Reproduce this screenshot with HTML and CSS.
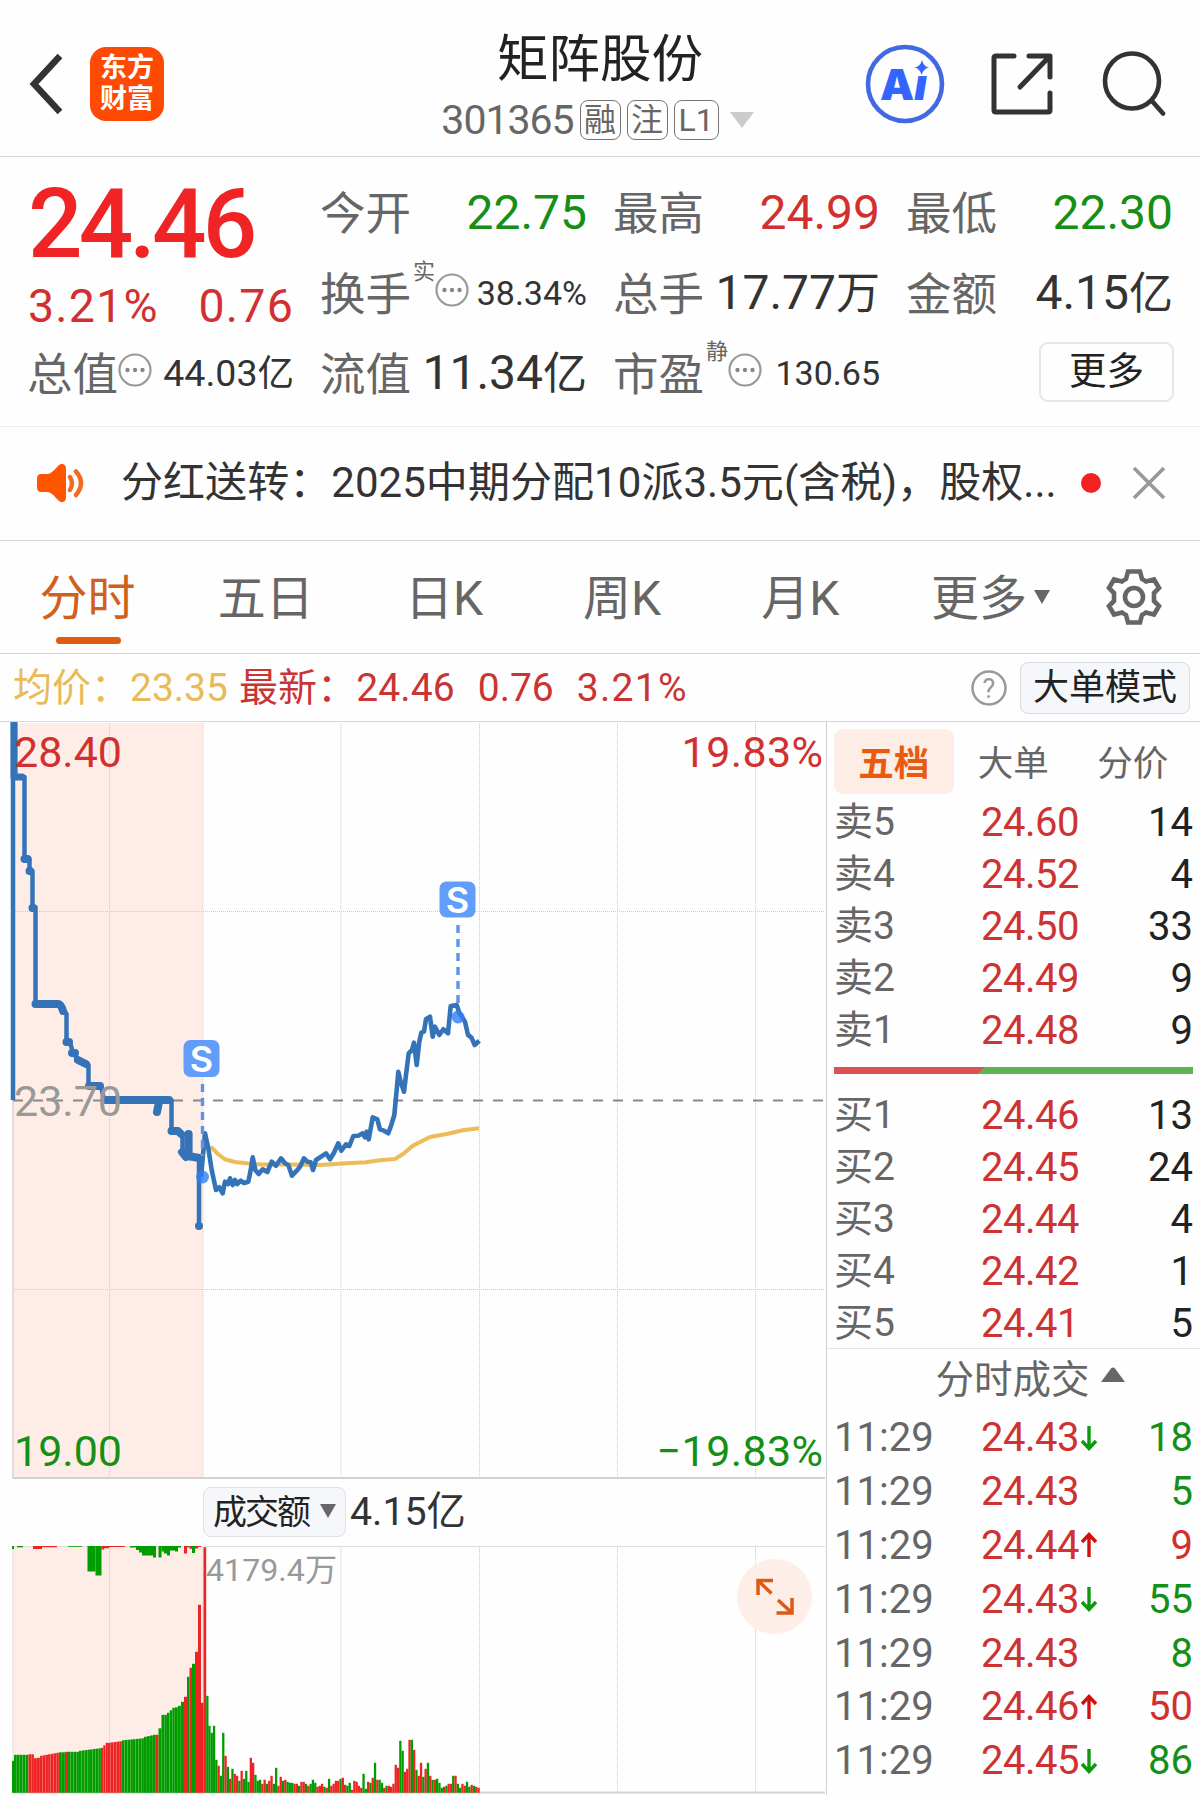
FILE: index.html
```html
<!DOCTYPE html>
<html lang="zh-CN">
<head>
    <meta charset="UTF-8">
    <meta name="viewport" content="width=device-width, initial-scale=1.0">
    <title>矩阵股份 301365</title>
    <link rel="stylesheet" href="styles.css">
</head>
<body>

<header class="header">
    <div class="header-left">
        <svg class="back" width="38" height="62" viewBox="0 0 38 62"><path d="M33 3 L7 31 L33 59" fill="none" stroke="#333" stroke-width="6.500"/></svg>
        <div class="logo"><span>东方</span><span>财富</span></div>
    </div>
    <div class="header-title">
        <h1>矩阵股份</h1>
        <div class="code-row">
            <span class="code">301365</span>
            <span class="badge">融</span>
            <span class="badge">注</span>
            <span class="badge badge-wide">L1</span>
            <svg class="code-arrow" width="24" height="16" viewBox="0 0 24 16"><path d="M0 0H24L12 16Z" fill="#ccc"/></svg>
        </div>
    </div>
    <div class="header-right">
        <svg width="80" height="80" viewBox="0 0 80 80">
            <circle cx="40" cy="40" r="37" fill="none" stroke="#4169e1" stroke-width="4.6"/>
            <text class="ai-text" x="15" y="56">A<tspan class="ai-i">ı</tspan></text>
            <path d="M57 16 Q58.500 22.500 64 23.500 Q58.500 24.500 56.500 31 Q55 24.500 49.500 23.500 Q55.500 22.500 57 16Z" fill="#3366ff"/>
        </svg>
        <svg width="64" height="64" viewBox="0 0 64 64" fill="none" stroke="#333" stroke-width="5" stroke-linecap="round" stroke-linejoin="round">
            <path d="M24 4H6Q4 4 4 6V58Q4 60 6 60H58Q60 60 60 58V41"/>
            <path d="M39 4H60V25M59 5L30 35"/>
        </svg>
        <svg width="64" height="66" viewBox="0 0 64 66" fill="none" stroke="#333" stroke-width="4.600" stroke-linecap="round">
            <ellipse cx="30" cy="30" rx="27" ry="27.500"/>
            <path d="M50 50L61 62.500"/>
        </svg>
    </div>
</header>

<section class="quote">
    <div class="price-cell">
        <div class="price">24.46</div>
        <div class="change"><span>3.21%</span><span>0.76</span></div>
    </div>
    <div class="cell"><span class="name">今开</span><span class="value down">22.75</span></div>
    <div class="cell"><span class="name">最高</span><span class="value up">24.99</span></div>
    <div class="cell"><span class="name">最低</span><span class="value down">22.30</span></div>
    <div class="cell"><span class="name">换手</span><span class="mark">实</span>
        <svg class="dots" width="34" height="34"><use href="#dots"/></svg>
        <span class="value small">38.34%</span></div>
    <div class="cell"><span class="name">总手</span><span class="value">17.77<i>万</i></span></div>
    <div class="cell"><span class="name">金额</span><span class="value">4.15<i>亿</i></span></div>
    <div class="cell"><span class="name">总值</span>
        <svg class="dots" width="34" height="34"><use href="#dots"/></svg>
        <span class="value medium">44.03<i>亿</i></span></div>
    <div class="cell"><span class="name">流值</span><span class="value">11.34<i>亿</i></span></div>
    <div class="cell"><span class="name">市盈</span><span class="mark">静</span>
        <svg class="dots" width="34" height="34"><use href="#dots"/></svg>
        <span class="value small">130.65</span></div>
    <div class="cell"><button class="btn-more">更多</button></div>
</section>

<section class="notice">
    <svg class="speaker" width="50" height="42" viewBox="0 0 50 42">
        <path d="M5 12H12Q16 11 21 5Q25 1 27 2Q30 3 30 7V35Q30 39 27 40Q25 41 21 37Q16 31 12 30H5Q1 30 1 25V17Q1 12 5 12Z" fill="#ff5500"/>
        <path d="M34 15Q38 21 34 28M40 9.500Q50 21 40 33" fill="none" stroke="#f26a25" stroke-width="4.500" stroke-linecap="round"/>
    </svg>
    <span class="notice-text">分红送转：2025中期分配10派3.5元(含税)，股权...</span>
    <span class="notice-dot"></span>
    <svg width="34" height="34" viewBox="0 0 34 34"><path d="M2 2L32 32M32 2L2 32" stroke="#999" stroke-width="3.600"/></svg>
</section>

<nav class="tabs">
    <div class="tab active">分时</div>
    <div class="tab">五日</div>
    <div class="tab">日K</div>
    <div class="tab">周K</div>
    <div class="tab">月K</div>
    <div class="tab">更多<svg class="tab-arrow" width="16" height="14" viewBox="0 0 16 14"><path d="M0 0H16L8 14Z" fill="#666"/></svg></div>
    <svg class="gear" width="60" height="68" viewBox="-30 -34 60 68" fill="none" stroke="#666" stroke-width="4.600">
        <path d="M-6 -25.500H6L8 -18Q10 -17 12 -15.500L20 -17.500L25 -9L20 -4V4L25 9L20 17.500L12 15.500Q10 17 8 18L6 25.500H-6L-8 18Q-10 17 -12 15.500L-20 17.500L-25 9L-20 4V-4L-25 -9L-20 -17.500L-12 -15.500Q-10 -17 -8 -18Z"/>
        <circle r="9"/>
    </svg>
</nav>

<div class="info">
    <span class="avg">均价：23.35</span>
    <span class="last">最新：24.46</span>
    <span class="last-num">0.76</span>
    <span class="last-num percent">3.21%</span>
    <svg class="help" width="38" height="38" viewBox="0 0 38 38">
        <circle cx="19" cy="19" r="16.500" fill="none" stroke="#999" stroke-width="2.500"/>
        <text x="19" y="28.500">?</text>
    </svg>
    <button class="btn-mode">大单模式</button>
</div>

<main class="main">
    <div class="charts">
        <svg class="price-chart" width="826" height="757" viewBox="0 722 826 757">
            <rect x="13" y="723" width="190" height="755" fill="#fdede6"/>
            <g class="grid">
                <path d="M109.500 723V1478M203 723V1478M341 723V1478M479.500 723V1478M617.500 723V1478M755.500 723V1478"/>
                <path d="M13 911.500H825M13 1289.500H825"/>
            </g>
            <path d="M13 1100V1478" stroke="#ddd" stroke-width="2"/>
            <path d="M13 1478H825" stroke="#d2d2d2" stroke-width="2"/>
            <path d="M13 1100.500H825" stroke="#888" stroke-width="2" stroke-dasharray="10 10"/>

            <polyline class="avg-line" points="210.600,1146.600 218,1154 225,1159.300 235,1162 246.600,1163.300 260,1164.600 290,1164.600 320,1165 343,1163.600 366,1162.300 380,1160.300 395,1159 403,1154 413,1145.600 430,1137 446.600,1134 463,1130.300 479,1128.300"/>

            <!-- call auction -->
            <g class="auction">
                <path d="M13 723V1100M15 723V777H24.500V859H29.500V871H32.500V907H35.500V1004H60L66.500 1014V1042H70L73 1053L78 1060L88.500 1065V1086H101L104 1100H171.500V1131H179L182.500 1135V1153H190V1133H188V1158H199V1226"/>
                <path class="thick" d="M24.500 859H27.500M29.500 871H30M32.500 908H33M35.500 1004H58Q61 1004 63 1011M66.500 1042H69M72 1053H75M78 1060L86 1064M89 1086H100M106 1100H169M159 1102L157 1112M171.500 1131H178L181 1134M182 1152L186 1157M188.500 1134V1156L199 1158M199 1226V1226.100"/>
                <path class="thick first" d="M14 720V777H22"/>
            </g>

            <polyline class="price-line" id="priceLine"/>

            <path class="trade-dash" d="M202.500 1084V1156M458 925V1008"/>
            <circle class="trade-dot" cx="202.500" cy="1177" r="6.500"/>
            <circle class="trade-dot" cx="458" cy="1017" r="6.500"/>
            <rect class="trade-box" x="183.500" y="1040" width="36" height="37" rx="7"/>
            <text class="trade-text" x="201.500" y="1071.500">S</text>
            <rect class="trade-box" x="439.500" y="881.500" width="36" height="36" rx="7"/>
            <text class="trade-text" x="457.500" y="913">S</text>

            <text class="axis red" x="14" y="767">28.40</text>
            <text class="axis gray" x="14" y="1116">23.70</text>
            <text class="axis green" x="14" y="1466">19.00</text>
            <text class="axis red end" x="823.500" y="767">19.83%</text>
            <text class="axis green end" x="823.500" y="1466">−19.83%</text>
        </svg>

        <div class="volume-head">
            <div class="select">成交额<svg width="16" height="14" viewBox="0 0 16 14"><path d="M0 0H16L8 14Z" fill="#666"/></svg></div>
            <span class="turnover">4.15亿</span>
        </div>

        <svg class="volume-chart" width="826" height="249" viewBox="0 1546 826 249">
            <rect x="13" y="1547" width="190" height="245" fill="#fdede6"/>
            <g class="grid">
                <path d="M109.500 1547V1792M203 1547V1792M341 1547V1792M479.500 1547V1792M617.500 1547V1792M755.500 1547V1792"/>
            </g>
            <path d="M13 1546.500H825M13 1547V1792" stroke="#ddd"/>
            <path d="M13 1792.500H825" stroke="#d2d2d2" stroke-width="2"/>
            <g id="bars"></g>
            <text class="max-volume" x="206" y="1581">4179.4万</text>
            <circle cx="774.500" cy="1596.500" r="37.500" fill="#fdede5" fill-opacity=".9"/>
            <path d="M773 1580.500H758V1595M758.500 1581L771.500 1593.500M776.500 1613H792V1598M791.500 1612.500L778 1600" fill="none" stroke="#d95b16" stroke-width="3.500"/>
        </svg>
    </div>

    <aside class="side">
        <div class="side-tabs">
            <div class="side-tab active">五档</div>
            <div class="side-tab">大单</div>
            <div class="side-tab">分价</div>
        </div>
        <div class="row"><span>卖5</span><b>24.60</b><em>14</em></div>
        <div class="row"><span>卖4</span><b>24.52</b><em>4</em></div>
        <div class="row"><span>卖3</span><b>24.50</b><em>33</em></div>
        <div class="row"><span>卖2</span><b>24.49</b><em>9</em></div>
        <div class="row"><span>卖1</span><b>24.48</b><em>9</em></div>
        <div class="ratio"></div>
        <div class="row"><span>买1</span><b>24.46</b><em>13</em></div>
        <div class="row"><span>买2</span><b>24.45</b><em>24</em></div>
        <div class="row"><span>买3</span><b>24.44</b><em>4</em></div>
        <div class="row"><span>买4</span><b>24.42</b><em>1</em></div>
        <div class="row"><span>买5</span><b>24.41</b><em>5</em></div>
        <div class="deals-title">分时成交<svg width="24" height="15" viewBox="0 0 24 15"><path d="M0 15L10 1.500Q12 -.5 14 1.500L24 15Z" fill="#666"/></svg></div>
        <div class="row deal"><span>11:29</span><b>24.43<svg class="arrow" width="18" height="26"><use href="#down"/></svg></b><em class="down">18</em></div>
        <div class="row deal"><span>11:29</span><b>24.43</b><em class="down">5</em></div>
        <div class="row deal"><span>11:29</span><b>24.44<svg class="arrow" width="18" height="26"><use href="#up"/></svg></b><em class="up">9</em></div>
        <div class="row deal"><span>11:29</span><b>24.43<svg class="arrow" width="18" height="26"><use href="#down"/></svg></b><em class="down">55</em></div>
        <div class="row deal"><span>11:29</span><b>24.43</b><em class="down">8</em></div>
        <div class="row deal"><span>11:29</span><b>24.46<svg class="arrow" width="18" height="26"><use href="#up"/></svg></b><em class="up">50</em></div>
        <div class="row deal"><span>11:29</span><b>24.45<svg class="arrow" width="18" height="26"><use href="#down"/></svg></b><em class="down">86</em></div>
    </aside>
</main>

<svg class="symbols" width="0" height="0">
    <symbol id="dots" viewBox="0 0 34 34">
        <circle cx="17" cy="17" r="15.500" fill="none" stroke="#999" stroke-width="2.200"/>
        <circle cx="9.500" cy="17" r="2.200" fill="#888"/><circle cx="17" cy="17" r="2.200" fill="#888"/><circle cx="24.500" cy="17" r="2.200" fill="#888"/>
    </symbol>
    <symbol id="down" viewBox="0 0 18 26">
        <path d="M9 1V23M2 16L9 23.500L16 16" fill="none" stroke="#0c9a0c" stroke-width="3.400"/>
    </symbol>
    <symbol id="up" viewBox="0 0 18 26">
        <path d="M9 25V3M2 10L9 2.500L16 10" fill="none" stroke="#d01010" stroke-width="3.400"/>
    </symbol>
</svg>

<script>
    // minute prices, x / y pairs in thirds of a pixel from (180, 1000)
    const prices = [63,530, 75,400, 85,445, 95,510, 108,570, 118,562, 128,580, 135,545, 145,552, 150,535, 158,555, 165,540, 172,552,
        182,542, 192,549, 205,545, 212,510, 218,472, 226,510, 236,522, 248,508, 262,516, 275,485, 288,497, 303,475, 315,490,
        325,495, 336,527, 350,512, 360,500, 372,475, 382,485, 392,487, 399,510, 408,480, 420,472, 438,460, 450,478, 462,458,
        475,430, 484,452, 498,433, 508,438, 520,408, 535,407, 548,400, 555,412, 560,395, 566,418, 578,352, 592,358, 600,388,
        612,392, 625,400, 634,375, 643,345, 650,270, 655,215, 662,245, 672,275, 678,225, 686,160, 696,150, 702,128, 710,195,
        718,125, 724,98, 732,95, 738,58, 750,50, 758,110, 765,80, 778,105, 790,88, 804,100, 812,18, 830,15, 838,38, 855,65,
        864,105, 874,112, 884,135, 898,122];
    const points = [];
    for (let i = 0; i < prices.length; i += 2) {
        points.push((180 + prices[i] / 3).toFixed(1) + ',' + (1000 + prices[i + 1] / 3).toFixed(1));
    }
    document.getElementById('priceLine').setAttribute('points', points.join(' '));

    const bars = document.getElementById('bars');
    const GREEN = '#009c00';
    const RED = '#ee2424';

    function addBar(x, y, width, height, color) {
        const rect = document.createElementNS('http://www.w3.org/2000/svg', 'rect');
        rect.setAttribute('x', x.toFixed(1));
        rect.setAttribute('y', y.toFixed(1));
        rect.setAttribute('width', width);
        rect.setAttribute('height', height.toFixed(1));
        rect.setAttribute('fill', color);
        bars.appendChild(rect);
    }

    // call auction: [from x, to x, start height, end height, color]
    const auction = [
        [12, 14, 32, 32, 'g'], [14, 28.5, 38, 38, 'g'], [28.5, 34, 38.5, 38.5, 'r'], [34, 40, 34.5, 35, 'r'], [40, 59, 37, 40, 'r'],
        [59, 65, 40.5, 40.5, 'g'], [65, 68, 41, 41, 'r'], [68, 79, 41, 41, 'g'], [79, 101, 42, 44.5, 'g'], [101, 108, 45, 50, 'r'],
        [108, 122, 50, 51.5, 'r'], [122, 144, 52.5, 54.5, 'g'], [144, 156, 56, 58, 'g'], [156, 158.5, 58, 58, 'r'],
        [158.5, 161.5, 64.5, 64.5, 'g'], [161.5, 167, 78, 78, 'g'], [167, 175, 80, 85, 'g'], [175, 181, 85.5, 87, 'g'],
        [181, 184, 91, 91, 'g'], [184, 187, 96, 96, 'r'], [187, 189.5, 116, 116, 'g'], [189.5, 192, 125, 125, 'r'],
        [192, 195, 129, 129, 'g'], [195, 198, 141, 141, 'r'], [198, 201, 188, 188, 'r'], [201, 203.5, 90, 90, 'r'],
        [203.5, 206.2, 245.5, 245.5, 'r'], [206.2, 208.5, 97, 97, 'g']
    ];
    auction.forEach(function([from, to, start, end, c]) {
        const count = Math.max(1, Math.round((to - from) / 2.8));
        const step = (to - from) / count;
        for (let i = 0; i < count; i++) {
            const h = start + (end - start) * (count > 1 ? i / (count - 1) : 0);
            addBar(from + i * step, 1792.8 - h, step - (count > 1 ? 0.15 : 0), h, c === 'g' ? GREEN : RED);
        }
    });

    // unmatched volume hanging from the top
    const unmatched = [
        [12, 14, 3, 'g'], [17, 23, 1.3, 'g'], [33, 42, 3, 'r'], [42, 57, 1.2, 'r'], [68, 82, .8, 'g'], [87.5, 95.5, 25.5, 'g'],
        [95.5, 101.5, 29.5, 'g'], [101.5, 104, 3.5, 'r'], [104, 109, 2.2, 'r'], [109, 125, 1, 'r'], [130, 136, 1.5, 'g'],
        [136, 139, 4, 'g'], [139, 142, 6.5, 'g'], [142, 153, 9.5, 'g'], [153, 156, 11.5, 'g'], [158.5, 161.5, 11.5, 'g'],
        [161.5, 164, 5.5, 'g'], [164, 167, 7.5, 'g'], [167, 170, 9.5, 'g'], [170, 175, 4.5, 'g'], [175, 178, 5.5, 'g'],
        [178, 181, 1.5, 'g'], [184, 187, 7.5, 'r'], [187, 189.5, 1.5, 'g'], [189.5, 192, 2.8, 'r'], [192, 195, 7, 'g'],
        [195, 198, 2.5, 'r'], [198, 201, 1, 'r']
    ];
    unmatched.forEach(function([from, to, h, c]) {
        addBar(from, 1546, to - from, h, c === 'g' ? GREEN : RED);
    });

    // continuous trading, one bar a minute
    const minutes = ('67g 60g 67g 33g 27r 17g 60g 37r 26g 14r 24g 19r 17r 12g 22r 14g 22g 11g 35r 30r 18g 12g 13g 9r 13r 9g 12r 17r 9g 25g ' +
        '7r 16r 12g 13r 11g 10g 10g 9r 9r 7g 11r 11r 9g 7r 9g 13g 10g 6r 7r 9r 6g 5r 14g 7r 9r 12r 12r 14g 15r 8r ' +
        '7g 10g 3r 12r 11r 7r 5r 19g 4g 11r 10g 15r 30g 13r 13g 10g 5r 7g 7r 6r 9r 28r 25r 52g 42g 21r 24r 53r 53g 43r ' +
        '23g 17r 30r 16g 24r 30g 17r 13g 13r 14g 10g 5g 6r 7g 9r 9r 17g 17r 9g 5g 9r 7r 11g 6g 8r 7g 6r 5r').split(' ');
    minutes.forEach(function(item, i) {
        const h = parseInt(item);
        addBar(208.3 + i * 2.3, 1792.8 - h, 2.3, h, item.endsWith('g') ? GREEN : RED);
    });
</script>

</body>
</html>
```
FILE: styles.css
```css
* {
    box-sizing: border-box;
}

body {
    margin: 0;
    width: 1200px;
    height: 1795px;
    overflow: hidden;
    background-color: #fefefe;
    color: #333;
    font-family: Roboto, "Noto Sans CJK SC", sans-serif;
}

svg {
    display: block;
    flex-shrink: 0;
}

button {
    font-family: inherit;
    padding: 0;
    color: #222;
}

i, em, b {
    font-style: normal;
    font-weight: normal;
}

.up {
    color: #d23030 !important;
}

.down {
    color: #168f16 !important;
}

.symbols {
    position: absolute;
}

/* header */
.header {
    display: grid;
    grid-template-columns: 1fr auto 1fr;
    height: 157px;
    border-bottom: 1px solid #d5d5d5;
}

.header-left {
    display: flex;
    align-items: center;
    gap: 25px;
    height: 157px;
    padding: 10px 0 0 27px;
}

.logo {
    display: flex;
    flex-direction: column;
    align-items: center;
    justify-content: center;
    width: 74px;
    height: 74px;
    border-radius: 16px;
    background-color: #ff4a05;
    color: white;
    font-size: 27px;
    font-weight: 700;
    line-height: 31px;
}

.header-title {
    display: flex;
    flex-direction: column;
    align-items: center;
    gap: 11px;
    padding-top: 31px;
}

.header-title h1 {
    margin: 0;
    font-size: 51.5px;
    font-weight: 400;
    line-height: 58px;
    color: #222;
}

.code-row {
    display: flex;
    align-items: center;
    gap: 6px;
    padding-right: 5px;
    color: #666;
}

.code {
    font-size: 41px;
    line-height: 40px;
    letter-spacing: -1px;
}

.badge {
    width: 41px;
    height: 40px;
    border: 1.5px solid #777;
    border-radius: 8px;
    font-size: 32px;
    line-height: 38px;
    text-align: center;
}

.badge-wide {
    width: 45px;
}

.code-arrow {
    margin-left: 5px;
}

.header-right {
    display: flex;
    justify-content: flex-end;
    align-items: center;
    gap: 45px;
    height: 157px;
    padding-right: 34px;
    padding-top: 11px;
}

.header-right svg + svg + svg {
    margin-left: 3px;
}

.ai-text {
    font-family: Inter, sans-serif;
    font-size: 43px;
    font-weight: 900;
    fill: #3366ff;
}

.ai-i {
    font-style: italic;
}

/* quote numbers */
.quote {
    display: grid;
    grid-template-columns: repeat(4, 266px);
    grid-template-rows: repeat(3, 80.5px);
    justify-content: space-between;
    height: 270px;
    padding: 15px 27px 0 28px;
    border-bottom: 1px solid #eee;
}

.price-cell {
    grid-row: span 2;
}

.price {
    color: #f02424;
    font-size: 96px;
    font-weight: 500;
    line-height: 104px;
    letter-spacing: -3.9px;
}

.change {
    display: flex;
    justify-content: space-between;
    color: #d23030;
    font-size: 46.5px;
    line-height: 61px;
    letter-spacing: 1.2px;
}

.cell {
    display: flex;
    align-items: center;
}

.name {
    margin: -4px 0 0 -1px;
    color: #666;
    font-size: 45.5px;
}

.value {
    margin-left: auto;
    font-size: 48px;
    line-height: 60px;
    margin-top: 1px;
}

.value i {
    font-size: 44px;
}

.small {
    font-size: 34px;
    margin-top: 0;
}

.medium {
    font-size: 37.5px;
}

.medium i {
    font-size: 36.5px;
}

.mark {
    align-self: flex-start;
    margin: 6px 0 0 2px;
    color: #666;
    font-size: 22px;
    line-height: 26px;
}

.dots {
    margin-top: -6px;
}

.btn-more {
    width: 135px;
    height: 60px;
    margin-left: auto;
    margin-top: -2px;
    margin-right: -1px;
    padding-bottom: 3px;
    border: 2px solid #e6e6e9;
    border-radius: 9px;
    background-color: #fefefe;
    font-size: 37.5px;
    line-height: 50px;
}

/* notice */
.notice {
    display: flex;
    align-items: center;
    height: 114px;
    padding: 0 34px 2px 36px;
    border-bottom: 1px solid #d5d8da;
}

.notice-text {
    margin-left: 35px;
    font-size: 42px;
    line-height: 60px;
    letter-spacing: .05px;
    white-space: nowrap;
}

.notice-dot {
    width: 20px;
    height: 20px;
    margin-left: auto;
    margin-right: 31px;
    border-radius: 50%;
    background-color: #f22222;
}

/* period tabs */
.tabs {
    display: flex;
    align-items: center;
    height: 113px;
    border-bottom: 1px solid #d5d8da;
}

.tab {
    display: flex;
    position: relative;
    align-items: center;
    justify-content: center;
    width: 178.2px;
    height: 100%;
    padding: 0 3px 7px 0;
    color: #666;
    font-size: 48px;
}

.tab.active {
    color: #d0601c;
}

.tab.active::after {
    content: "";
    position: absolute;
    left: 56px;
    bottom: 9px;
    width: 65px;
    height: 7px;
    border-radius: 4px;
    background-color: #e05a12;
}

.tab-arrow {
    margin: 6px -24px 0 7px;
}

.gear {
    margin-left: 35px;
}

/* latest price line */
.info {
    display: flex;
    align-items: center;
    height: 68px;
    padding: 0 10px 0 13px;
    border-bottom: 1px solid #d5d8da;
    font-size: 39px;
    line-height: 60px;
}

.avg {
    color: #e9bb58;
}

.last {
    margin-left: 11px;
    color: #c93434;
    letter-spacing: .1px;
}

.last-num {
    margin-left: 23px;
    color: #c93434;
}

.percent {
    letter-spacing: 1.3px;
}

.help {
    margin-left: auto;
    margin-right: 12px;
}

.help text {
    fill: #999;
    font-size: 27px;
    text-anchor: middle;
}

.btn-mode {
    width: 170px;
    height: 52px;
    padding-bottom: 0;
    border: 1.5px solid #d8dbdf;
    border-radius: 8px;
    background-color: #f6f7fa;
    font-size: 36px;
    line-height: 44px;
}

/* charts */
.main {
    display: flex;
}

.charts {
    width: 827px;
    border-right: 1px solid #ccd0d2;
}

.grid path {
    fill: none;
    stroke: #ccc;
    stroke-width: 1;
    stroke-dasharray: 1 1;
}

.avg-line {
    fill: none;
    stroke: #edbc58;
    stroke-width: 4;
    stroke-linejoin: round;
}

.price-line {
    fill: none;
    stroke: #3473b8;
    stroke-width: 4.6;
    stroke-linejoin: round;
}

.auction path {
    fill: none;
    stroke: #3473b8;
    stroke-width: 4.5;
    stroke-linejoin: round;
}

.auction .thick {
    stroke-width: 8;
    stroke-linecap: round;
}

.auction .first {
    stroke-width: 7;
}

.trade-dash {
    stroke: #5a93e8;
    stroke-width: 3.4;
    stroke-dasharray: 8 6;
}

.trade-dot {
    fill: #2f7df6;
    fill-opacity: .8;
}

.trade-box {
    fill: #629ef9;
}

.trade-text {
    fill: white;
    font-family: Inter, sans-serif;
    font-size: 36px;
    font-weight: 600;
    text-anchor: middle;
}

.axis {
    font-size: 43px;
}

.red {
    fill: #d23030;
}

.green {
    fill: #168f16;
}

.gray {
    fill: #999;
}

.end {
    letter-spacing: .4px;
    text-anchor: end;
}

.volume-head {
    display: flex;
    align-items: center;
    height: 67px;
    padding: 0 0 2px 203px;
}

.select {
    display: flex;
    align-items: center;
    justify-content: center;
    gap: 11px;
    width: 143px;
    height: 50px;
    padding-bottom: 5px;
    border: 1.5px solid #dfe1e5;
    border-radius: 8px;
    background-color: #f6f7fa;
    color: #222;
    font-size: 34px;
    letter-spacing: -2px;
}

.select svg {
    margin-top: 3px;
}

.turnover {
    margin: -8px 0 0 4px;
    font-size: 39.3px;
}

.max-volume {
    fill: #999;
    font-size: 32.2px;
}

/* order book */
.side {
    width: 373px;
}

.side-tabs {
    display: flex;
    height: 73px;
    padding: 7px 6px 1px 7px;
}

.side-tab {
    width: 119.5px;
    color: #666;
    font-size: 35.5px;
    line-height: 70px;
    text-align: center;
}

.side-tab.active {
    border-radius: 9px;
    background-color: #fdede5;
    color: #ea5a0e;
    font-weight: 700;
}

.row {
    display: grid;
    grid-template-columns: 146px 130px 1fr;
    height: 52px;
    padding: 0 7px 0 8px;
    line-height: 55px;
    font-size: 40px;
}

.row span {
    margin-left: -1px;
    color: #666;
    font-size: 39px;
}

.row b {
    display: flex;
    align-items: center;
    color: #cf3232;
    letter-spacing: -.5px;
}

.row em {
    color: #222;
    text-align: right;
}

.ratio {
    height: 7px;
    margin: 12px 7px 14px;
    background: linear-gradient(135deg, #dc5252 41%, #5fb350 41%);
}

.deals-title {
    display: flex;
    align-items: center;
    justify-content: center;
    gap: 11px;
    height: 61px;
    padding: 0 0 7px 33px;
    border-top: 1px solid #e4e4e4;
    color: #666;
    font-size: 38.5px;
}

.deals-title svg {
    margin-top: -2px;
}

.deal {
    height: 53.9px;
    line-height: 57px;
}

.deal span {
    font-size: 40px;
}

.arrow {
    margin-left: 1px;
}
```
